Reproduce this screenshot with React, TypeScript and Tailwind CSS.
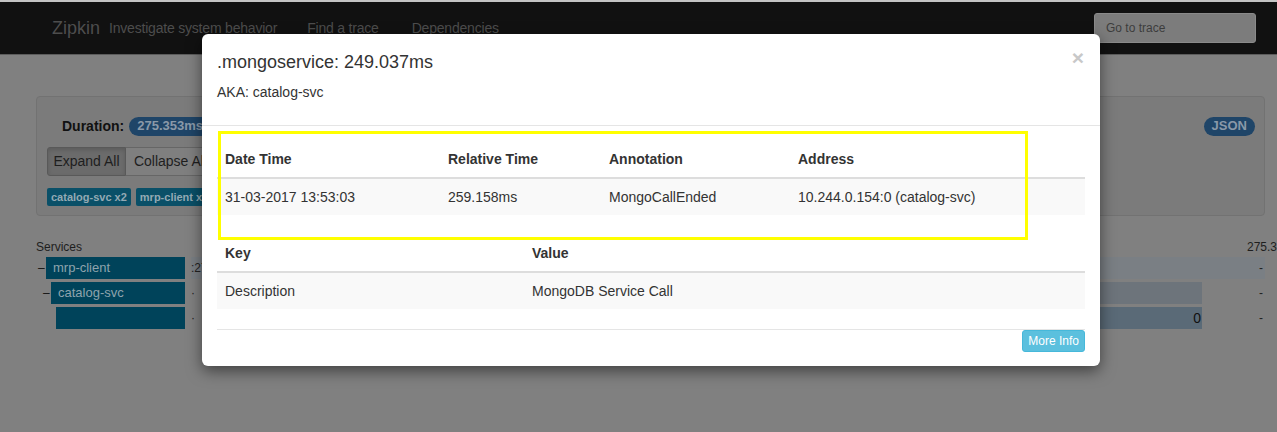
import React from "react";

const font = "font-['Liberation_Sans',Arial,Helvetica,sans-serif]";

function NavBar() {
  return (
    <div className="h-[55px] border-t-2 border-[#c4c4c4] bg-[#111111] border-b border-b-[#5c5c5c] flex items-center relative">
      <span className="ml-[52px] text-[18px] text-[#4d4d4d] leading-none">Zipkin</span>
      <span className="ml-[9px] text-[14px] text-[#4d4d4d] tracking-[-0.2px]">Investigate system behavior</span>
      <span className="ml-[30px] text-[14px] text-[#4d4d4d] tracking-[-0.2px]">Find a trace</span>
      <span className="ml-[33px] text-[14px] text-[#4d4d4d] tracking-[-0.2px]">Dependencies</span>
      <div className="ml-auto mr-[21px] w-[162px] h-[30px] rounded-[3px] border border-[#8a8a8a] bg-[#7c7c7c] flex items-center pl-[11px] text-[12px] text-[#3c3c3c]">
        Go to trace
      </div>
    </div>
  );
}

function Background() {
  return (
    <div className="pl-[36px] pr-[12px] pt-[41px]">
      <div className="h-[120px] rounded-[4px] border border-[#727272] bg-[#7b7b7b] px-[10px] pt-[19px]">
        <div className="flex items-center h-[20px]">
          <span className="ml-[15px] text-[14px] font-bold text-[#111]">Duration:</span>
          <span className="ml-[5px] h-[19px] px-[8px] rounded-full bg-[#1f4568] text-[13px] font-bold text-[#8a99a8] flex items-center">275.353ms</span>
          <span className="ml-auto mr-[-1px] h-[19px] px-[8px] rounded-full bg-[#1f4568] text-[13px] font-bold text-[#8a99a8] flex items-center">JSON</span>
        </div>
        <div className="flex mt-[11px] h-[29px]">
          <div className="w-[79px] border border-[#595959] bg-[#6b6b6b] rounded-l-[3px] flex items-center justify-center text-[14px] text-[#1e1e1e] shadow-[inset_0_2px_4px_rgba(0,0,0,0.15)]">Expand All</div>
          <div className="w-[90px] border border-l-0 border-[#666] bg-[#7f7f7f] flex items-center justify-center text-[14px] text-[#1e1e1e]">Collapse All</div>
        </div>
        <div className="flex mt-[12px] gap-[5px]">
          <span className="h-[18px] px-[4px] rounded-[2px] bg-[#0a5068] text-[11px] font-bold text-[#93aab4] flex items-center">catalog-svc x2</span>
          <span className="h-[18px] px-[4px] rounded-[2px] bg-[#0a5068] text-[11px] font-bold text-[#93aab4] flex items-center">mrp-client x1</span>
        </div>
      </div>
      <div className="mt-[22px] flex justify-between h-[17px] items-center text-[12px] text-[#1e1e1e]">
        <span>Services</span>
        <span className="mr-[-12px]">275.3</span>
      </div>
      <div className="mt-[2px] flex flex-col gap-[3px]">
        <div className="flex h-[22px] items-stretch">
          <div className="w-[150px] flex items-stretch">
            <span className="w-[10px] text-[12px] text-[#111] flex items-center pl-[2px]">–</span>
            <div className="w-[139px] bg-[#00435a] text-[13px] text-[#8ea3ad] flex items-center pl-[7px]">mrp-client</div>
          </div>
          <div className="ml-[5px] flex-1 bg-[#7a7f84] flex items-center justify-between text-[12px] text-[#222]">
            <span>:27</span>
            <span className="mr-[2px]">-</span>
          </div>
        </div>
        <div className="flex h-[22px] items-stretch">
          <div className="w-[150px] flex items-stretch">
            <span className="w-[15px] text-[12px] text-[#111] flex items-center pl-[7px]">–</span>
            <div className="w-[134px] bg-[#00435a] text-[13px] text-[#8ea3ad] flex items-center pl-[7px]">catalog-svc</div>
          </div>
          <div className="ml-[5px] flex-1 flex items-center text-[12px] text-[#222]">
            <span className="w-[20px]">·</span>
            <div className="ml-[100px] w-[891px] h-full bg-[#6d747b]" />
            <span className="ml-auto mr-[2px]">-</span>
          </div>
        </div>
        <div className="flex h-[22px] items-stretch">
          <div className="w-[150px] flex items-stretch">
            <span className="w-[20px]" />
            <div className="w-[129px] bg-[#00435a]" />
          </div>
          <div className="ml-[5px] flex-1 flex items-center text-[12px] text-[#222]">
            <span className="w-[20px]">·</span>
            <div className="ml-[100px] w-[891px] h-full bg-[#5a6a77] flex items-center justify-end pr-[1px] text-[14px] text-[#111]">0</div>
            <span className="ml-auto mr-[2px]">-</span>
          </div>
        </div>
      </div>
    </div>
  );
}

function Modal() {
  return (
    <div className="absolute left-[202px] top-[34px] w-[898px] bg-white rounded-[6px] shadow-[0_5px_15px_rgba(0,0,0,0.5)] text-[#333]">
      <span className="absolute top-[13px] right-[16px] text-[21px] font-bold leading-none text-[#c8c8c8]">×</span>
      <div className="px-[15px] pt-[18px] pb-[23px] border-b border-[#e5e5e5]">
        <div className="text-[18px] leading-[20px]">.mongoservice: 249.037ms</div>
        <div className="mt-[10px] text-[14px] leading-[20px]">AKA: catalog-svc</div>
      </div>
      <div className="px-[15px] pt-[15px]">
        <table className="w-full text-[14px] leading-[20px] mb-[20px] border-collapse">
          <thead>
            <tr>
              <th className="w-[223px] p-[8px] text-left font-bold border-b-2 border-[#ddd]">Date Time</th>
              <th className="w-[161px] p-[8px] text-left font-bold border-b-2 border-[#ddd]">Relative Time</th>
              <th className="w-[189px] p-[8px] text-left font-bold border-b-2 border-[#ddd]">Annotation</th>
              <th className="p-[8px] text-left font-bold border-b-2 border-[#ddd]">Address</th>
            </tr>
          </thead>
          <tbody>
            <tr className="bg-[#f9f9f9]">
              <td className="p-[8px]">31-03-2017 13:53:03</td>
              <td className="p-[8px]">259.158ms</td>
              <td className="p-[8px]">MongoCallEnded</td>
              <td className="p-[8px]">10.244.0.154:0 (catalog-svc)</td>
            </tr>
          </tbody>
        </table>
        <table className="w-full text-[14px] leading-[20px] mb-[20px] border-collapse">
          <thead>
            <tr>
              <th className="w-[307px] p-[8px] text-left font-bold border-b-2 border-[#ddd]">Key</th>
              <th className="p-[8px] text-left font-bold border-b-2 border-[#ddd]">Value</th>
            </tr>
          </thead>
          <tbody>
            <tr className="bg-[#f9f9f9]">
              <td className="p-[8px]">Description</td>
              <td className="p-[8px]">MongoDB Service Call</td>
            </tr>
          </tbody>
        </table>
      </div>
      <div className="mx-[15px] border-t border-[#e5e5e5] flex justify-end pb-[14px]">
        <button className="h-[22px] px-[5px] rounded-[3px] border border-[#46b8da] bg-[#5bc0de] text-white text-[12px] leading-none">More Info</button>
      </div>
      <div className="absolute left-[16px] top-[97px] w-[810px] h-[109px] border-[3px] border-[#ffff00] pointer-events-none" />
    </div>
  );
}

export default function App() {
  return (
    <div className={`relative w-[1277px] h-[432px] overflow-hidden bg-[#808080] ${font}`}>
      <NavBar />
      <Background />
      <Modal />
    </div>
  );
}
